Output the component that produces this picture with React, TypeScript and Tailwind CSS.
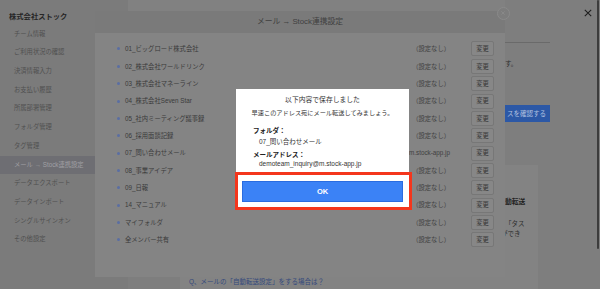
import React from 'react';

const menu = [
  'チーム情報',
  'ご利用状況の確認',
  '決済情報入力',
  'お支払い履歴',
  '所属部署管理',
  'フォルダ管理',
  'タグ管理',
  'メール → Stock連携設定',
  'データエクスポート',
  'データインポート',
  'シングルサインオン',
  'その他設定',
];

const folders = [
  { name: '01_ビッグロード株式会社', status: '（設定なし）' },
  { name: '02_株式会社ワールドリンク', status: '（設定なし）' },
  { name: '03_株式会社マネーライン', status: '（設定なし）' },
  { name: '04_株式会社Seven Star', status: '（設定なし）' },
  { name: '05_社内ミーティング議事録', status: '（設定なし）' },
  { name: '06_採用面談記録', status: '（設定なし）' },
  { name: '07_問い合わせメール', status: 'demoteam_inquiry@m.stock-app.jp' },
  { name: '08_事業アイデア', status: '（設定なし）' },
  { name: '09_日報', status: '（設定なし）' },
  { name: '14_マニュアル', status: '（設定なし）' },
  { name: 'マイフォルダ', status: '（設定なし）' },
  { name: '全メンバー共有', status: '（設定なし）' },
];

const Sidebar: React.FC = () => (
  <aside className="w-[95px] shrink-0 bg-[#7b7b7b] pt-[11px]">
    <div className="pl-[9px] h-[12px] leading-[12px] text-[7.3px] font-bold text-[#262626]">株式会社ストック</div>
    <ul className="mt-[1.7px]">
      {menu.map((item, i) => (
        <li
          key={item}
          className={`h-[18.7px] leading-[18.7px] pl-[14px] text-[6.3px] whitespace-nowrap ${
            i === 7 ? 'bg-[#6e6e73] text-[#a0a0a4]' : 'text-[#505050]'
          }`}
        >
          {item}
        </li>
      ))}
    </ul>
  </aside>
);

// page behind the modals – only the edges peek out
const PageContent: React.FC = () => (
  <main className="flex-1 flex">
    <div className="w-[33px] shrink-0" />
    <div className="flex-1 flex bg-[#7e7e7e]">
      <div className="w-[377px] shrink-0 flex flex-col">
        <div className="h-[11px] bg-[#818181]" />
        <div className="mt-[154px] ml-[52px] flex-1 bg-[#838383] flex flex-col justify-end pb-[2px]">
          <div className="pl-[9px] h-[10px] leading-[10px] text-[6.5px] text-[#34497c] whitespace-nowrap">
            Q、メールの「自動転送設定」をする場合は？
          </div>
        </div>
      </div>
      <div className="flex-1 flex flex-col">
        <div className="mt-[42px] w-[45px] h-px bg-[#6a6a6a]" />
        <p className="mt-[16px] h-[10px] leading-[10px] text-[6.5px] text-[#2e2e2e] whitespace-nowrap">す。</p>
        <div className="mt-[36px] w-[45px] h-[17px] pl-[2px] flex items-center bg-[#2c58a6] text-[6.5px] text-[#b3c2e0] whitespace-nowrap overflow-hidden">
          スを確認する
        </div>
        <div className="mt-[43px] w-[33px] flex-1 bg-[#838383] pt-[32px]">
          <div className="h-[10px] leading-[10px] text-[6.8px] font-bold text-[#1f1f1f] whitespace-nowrap">動転送</div>
          <div className="mt-[12px] h-[10px] leading-[10px] text-[6.5px] text-[#2e2e2e] whitespace-nowrap">「タス</div>
          <div className="h-[10px] leading-[10px] -ml-[4px] text-[6.5px] text-[#2e2e2e] whitespace-nowrap">ができ</div>
        </div>
      </div>
    </div>
  </main>
);

const SettingsModal: React.FC = () => (
  <div className="absolute inset-0 flex justify-center">
    <div className="relative mt-[11px] w-[410px] h-[266px] flex flex-col">
      <div className="h-[22px] shrink-0 bg-[#7a7a7a] flex items-center justify-center text-[7.8px] text-[#404040]">
        メール → Stock連携設定
      </div>
      <div className="flex-1 bg-[#848484] pt-[7.3px]">
        {folders.map((f) => (
          <div key={f.name} className="h-[17.35px] flex items-center pl-[22px] pr-[11px]">
            <span className="w-[3px] h-[3px] rounded-full bg-[#5a6ea3]" />
            <span className="ml-[5px] flex-1 text-[6.3px] text-[#3a3a3a] whitespace-nowrap">{f.name}</span>
            <span className="text-[6.3px] text-[#404040] whitespace-nowrap">{f.status}</span>
            <button className="ml-[21px] w-[23px] h-[15px] flex items-center justify-center rounded-[2px] border border-[#777] bg-[#878787] text-[6.3px] text-[#383838]">
              変更
            </button>
          </div>
        ))}
      </div>
      <div className="absolute -top-[4.5px] -right-[4.5px] w-[13px] h-[13px] rounded-full border border-[#8a8a8a] bg-[#7d7d7d] flex items-center justify-center">
        <svg width="4" height="4" viewBox="0 0 10 10" stroke="#929292" strokeWidth="1.5">
          <path d="M1 1L9 9M9 1L1 9" />
        </svg>
      </div>
    </div>
  </div>
);

const SavedDialog: React.FC = () => (
  <div className="absolute left-[236px] top-[89px] w-[173px] bg-white pt-[5px] px-[6px] pb-[6px] text-[#333]">
    <p className="h-[12px] leading-[12px] text-center text-[6.8px]">以下内容で保存しました</p>
    <p className="mt-[1px] h-[12px] leading-[12px] text-center text-[6.2px] whitespace-nowrap">
      早速このアドレス宛にメール転送してみましょう。
    </p>
    <div className="pl-[11px]">
      <p className="mt-[7px] h-[10px] leading-[10px] text-[6.5px] font-bold text-[#222]">フォルダ：</p>
      <p className="mt-[0.5px] pl-[6px] h-[10px] leading-[10px] text-[6.5px]">07_問い合わせメール</p>
      <p className="mt-[3.5px] h-[10px] leading-[10px] text-[6.5px] font-bold text-[#222]">メールアドレス：</p>
      <p className="-mt-px pl-[6px] h-[10px] leading-[10px] text-[6.5px]">demoteam_inquiry@m.stock-app.jp</p>
    </div>
    <button className="mt-[12px] w-full h-[21px] flex items-center justify-center bg-[#3b82f6] border border-[#2a6ce0] text-white text-[7.5px] font-bold">
      OK
    </button>
  </div>
);

export default function App() {
  return (
    <div className="relative w-[600px] h-[289px] overflow-hidden bg-[#7b7b7b] font-['Liberation_Sans','Noto_Sans_CJK_JP',sans-serif]">
      <div className="flex h-full">
        <Sidebar />
        <PageContent />
      </div>

      <SettingsModal />

      {/* page close + scrollbar */}
      <svg className="absolute left-[584px] top-[9px]" width="8" height="8" viewBox="0 0 10 10" stroke="#1c1c1c" strokeWidth="1.3">
        <path d="M1 1L9 9M9 1L1 9" />
      </svg>
      <div className="absolute right-px top-0 w-[2.5px] h-[249px] rounded-full bg-[#3c3c3c]" />

      <SavedDialog />

      {/* annotation */}
      <div className="absolute left-[235px] top-[172px] w-[177px] h-[38px] border-[3px] border-[#f4361c]" />
    </div>
  );
}
